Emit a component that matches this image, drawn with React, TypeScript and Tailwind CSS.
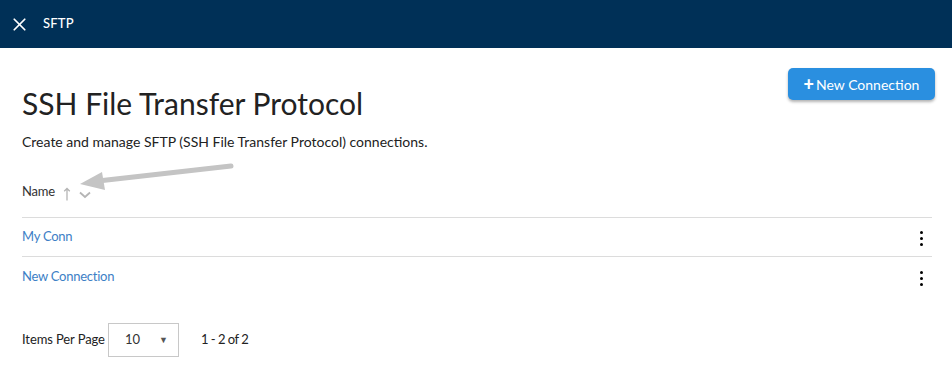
import { X } from 'lucide-react';

const rows = ['My Conn', 'New Connection'];

function Kebab() {
  return (
    <div className="flex flex-col items-center gap-[3px] px-1">
      <span className="w-[3px] h-[3px] bg-black rounded-full" />
      <span className="w-[3px] h-[3px] bg-black rounded-full" />
      <span className="w-[3px] h-[3px] bg-black rounded-full" />
    </div>
  );
}

export default function App() {
  return (
    <div className="w-[952px] h-[371px] bg-white relative overflow-hidden" style={{ fontFamily: 'Lato, "Open Sans", sans-serif' }}>
      {/* top bar */}
      <div className="h-12 bg-[#003057] flex items-center pl-[9px] gap-[13px] text-white">
        <X size={21} strokeWidth={2} />
        <span className="text-[13px] font-medium tracking-[0.2px]">SFTP</span>
      </div>

      <div className="px-[22px] pr-[17px]">
        <div className="flex justify-between">
          <div>
            <h1 className="text-[30px] text-[#222] leading-none mt-[40px]">SSH File Transfer Protocol</h1>
            <p className="text-[14px] text-[#222] mt-[13px]">Create and manage SFTP (SSH File Transfer Protocol) connections.</p>
          </div>
          <button className="mt-5 h-8 w-[147px] rounded-[5px] bg-[#2a8fe0] text-white text-[14px] flex items-center justify-center gap-[2px] shadow-[0_2px_3px_rgba(0,0,0,0.3)]">
            <span className="text-[18px] font-black leading-none">+</span>New Connection
          </button>
        </div>

        {/* table header */}
        <div className="mt-[14px] h-[52px] flex items-center text-[13px] text-[#333] border-b border-[#dcdcdc] mr-[3px]">
          <span className="tracking-[-0.2px]">Name</span>
          <svg width="8" height="14" viewBox="0 0 8 14" className="ml-[8px] mt-[4px]" fill="none" stroke="#b5b5b5" strokeWidth="1.3">
            <path d="M4 1.5V13.5M1.2 4.3L4 1.5L6.8 4.3" />
          </svg>
          <svg width="12" height="8" viewBox="0 0 12 8" className="ml-[8px] mt-[6px]" fill="none" stroke="#b5b5b5" strokeWidth="1.8">
            <path d="M1 1.5L6 6L11 1.5" />
          </svg>
        </div>

        {rows.map((r, i) => (
          <div key={r} className={`h-[39px] flex items-center justify-between mr-[3px] ${i < rows.length - 1 ? 'border-b border-[#dcdcdc]' : ''}`}>
            <a className="text-[13px] text-[#3d80c6] tracking-[-0.25px]">{r}</a>
            <div className="mr-[5px] mt-[3px]"><Kebab /></div>
          </div>
        ))}

        {/* pagination */}
        <div className="mt-[27px] flex items-center text-[13px] text-[#222]">
          <span className="tracking-[-0.1px]">Items Per Page</span>
          <div className="ml-[3px] w-[71px] h-[34px] border border-[#c8c8c8] flex items-center justify-between pl-4 pr-[10px]">
            <span className="text-[#333]">10</span>
            <span className="text-[9px] text-[#555]">▼</span>
          </div>
          <span className="ml-[22px] tracking-[-0.5px]">1 - 2 of 2</span>
        </div>
      </div>

      {/* annotation arrow */}
      <svg className="absolute left-0 top-0 pointer-events-none" width="952" height="371">
        <line x1="231" y1="166" x2="98" y2="181" stroke="#c4c4c4" strokeWidth="5" strokeLinecap="round" />
        <polygon points="80,184 102,172 105,190" fill="#c4c4c4" />
      </svg>
    </div>
  );
}
